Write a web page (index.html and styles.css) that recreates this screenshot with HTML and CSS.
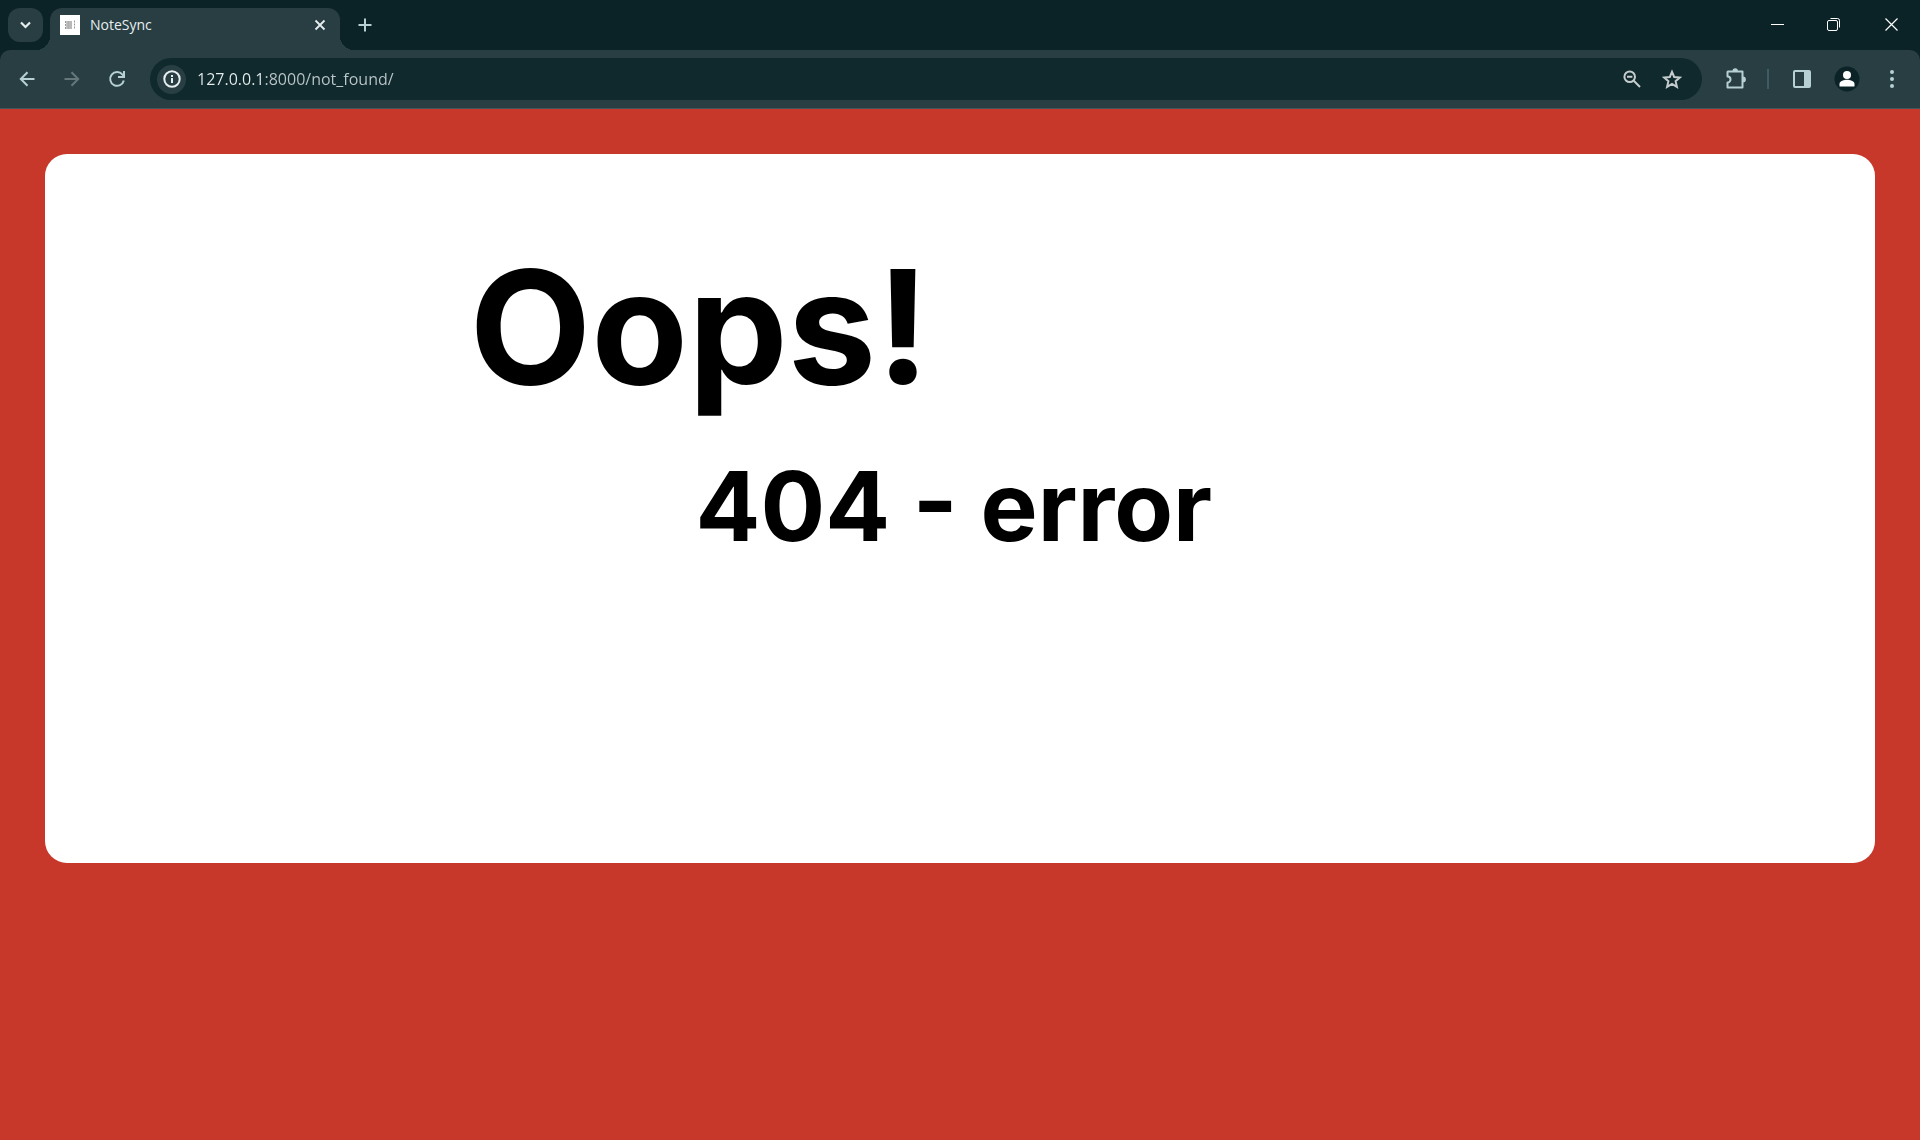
FILE: index.html
```html
<!DOCTYPE html>
<html lang="en">
<head>
<meta charset="utf-8">
<title>NoteSync</title>
<link rel="stylesheet" href="styles.css">
</head>
<body>
<header class="browser">
  <div class="tabstrip">
    <button class="tab-search" aria-label="Search tabs"><svg width="35" height="34" viewBox="0 0 35 34"><path d="M13 14.500l4.500 4.500 4.500-4.500" fill="none" stroke="#e6eeef" stroke-width="2.200"/></svg></button>
    <div class="tab">
      <svg class="favicon" width="20" height="20" viewBox="0 0 20 20"><path fill="#fff" d="M0 0h20v20H0z"/><path fill="#c4c4c4" d="M6 6h6v8H6z"/><path d="M5.500 6v8M7.500 7h4M7.500 9h4M7.500 11h4M7.500 13h4M14.500 5.500v9" stroke="#999" stroke-dasharray="2 1"/></svg>
      <span class="tab-title">NoteSync</span>
      <button class="tab-close" aria-label="Close tab"><svg width="20" height="20" viewBox="0 0 20 20"><path d="M5.500 5.500l9 9M14.500 5.500l-9 9" stroke="#e6eeef" stroke-width="1.800"/></svg></button>
    </div>
    <button class="new-tab" aria-label="New tab"><svg width="20" height="20" viewBox="0 0 20 20"><path d="M10 3.500v13M3.500 10h13" stroke="#b6d0d4" stroke-width="2"/></svg></button>
    <div class="window-controls">
      <button aria-label="Minimize"><svg width="20" height="20" viewBox="0 0 20 20"><path d="M3 9.500h13" stroke="#fff"/></svg></button>
      <button aria-label="Restore"><svg width="20" height="20" viewBox="0 0 20 20" fill="none" stroke="#fff"><rect x="2.500" y="5.500" width="10" height="10" rx="1.500"/><path d="M5.500 3.500h7a2 2 0 0 1 2 2v7"/></svg></button>
      <button aria-label="Close"><svg width="20" height="20" viewBox="0 0 20 20"><path d="M3.500 3.500l12 12M15.500 3.500l-12 12" stroke="#fff" stroke-width="1.200"/></svg></button>
    </div>
  </div>
  <div class="toolbar">
    <button class="tool" aria-label="Back"><svg width="20" height="20" viewBox="0 0 20 20" fill="none" stroke="#b6d0d4" stroke-width="2"><path d="M17.500 10H4M10.500 3.300L3.800 10l6.700 6.700"/></svg></button>
    <button class="tool" aria-label="Forward" disabled><svg width="20" height="20" viewBox="0 0 20 20" fill="none" stroke="#66777b" stroke-width="2"><path d="M2.500 10H16M9.500 3.300l6.700 6.700-6.700 6.700"/></svg></button>
    <button class="tool" aria-label="Reload"><svg width="20" height="20" viewBox="0 0 20 20" fill="none" stroke="#b6d0d4" stroke-width="2"><path d="M16.800 11.500A6.900 6.900 0 1 1 15.500 5.600L17 7.500M17 2v6h-6"/></svg></button>
    <form class="omnibox">
      <button type="button" class="site-info" aria-label="View site information"><svg width="20" height="20" viewBox="0 0 20 20"><circle cx="10" cy="10" r="7.700" fill="none" stroke="#e6eeef" stroke-width="2"/><path d="M10 9v5M10 6v2" stroke="#e6eeef" stroke-width="2"/></svg></button>
      <input class="url" type="text" aria-label="Address" value="127.0.0.1:8000/not_found/">
      <button type="button" class="omni-action" aria-label="Zoom"><svg width="20" height="20" viewBox="0 0 20 20" fill="none" stroke="#c4cccd" stroke-width="2"><circle cx="7.700" cy="7.700" r="5.300"/><path d="M5 7.700h5.400M11.500 11.500l6.500 6.500"/></svg></button>
      <button type="button" class="omni-action" aria-label="Bookmark this page"><svg width="20" height="20" viewBox="0 0 20 20"><path d="M10 2.800l2.200 5.200 5.700.5-4.300 3.700 1.300 5.600-4.900-3-4.900 3 1.300-5.600L2.100 8.500 7.800 8z" fill="none" stroke="#c4cccd" stroke-width="2"/></svg></button>
    </form>
    <button class="tool" aria-label="Extensions"><svg width="24" height="24" viewBox="0 0 24 24"><path d="M4 4.500h14.500V20.500H3.500v-5a3 3 0 0 0 0-6V5z" fill="none" stroke="#b6d0d4" stroke-width="2" stroke-linejoin="round"/><path d="M8.500 4a2.700 2.700 0 0 1 5.400 0zM19 9.500a2.800 2.800 0 0 1 0 5.800z" fill="#b6d0d4"/></svg></button>
    <span class="divider"></span>
    <button class="tool" aria-label="Side panel"><svg width="20" height="20" viewBox="0 0 20 20"><rect x="2" y="2" width="16" height="16" rx="1" fill="none" stroke="#b6d0d4" stroke-width="2"/><path d="M12 2h6v16h-6z" fill="#b6d0d4"/></svg></button>
    <button class="tool" aria-label="Profile"><svg width="26" height="26" viewBox="0 0 26 26"><circle cx="13" cy="13" r="12.500" fill="#0b2226"/><circle cx="13" cy="9" r="4" fill="#fff"/><path d="M5.500 20v-2.200c0-2.800 5-4 7.500-4s7.500 1.200 7.500 4V20q0 .5-.5.5H6q-.5 0-.5-.5z" fill="#fff"/></svg></button>
    <button class="tool" aria-label="Menu"><svg width="20" height="20" viewBox="0 0 20 20" fill="#b6d0d4"><circle cx="10" cy="3" r="2"/><circle cx="10" cy="10" r="2"/><circle cx="10" cy="17" r="2"/></svg></button>
  </div>
</header>
<main class="page">
  <section class="card">
    <h1 class="oops">Oops!</h1>
    <p class="error">404 - error</p>
  </section>
</main>
</body>
</html>
```
FILE: styles.css
```css
* { box-sizing: border-box; }

body {
  margin: 0;
  min-height: 100vh;
  display: flex;
  flex-direction: column;
  background: #c7382a;
  font-family: "Open Sans", "Noto Sans", sans-serif;
}

button {
  display: flex;
  align-items: center;
  justify-content: center;
  flex: none;
  margin: 0;
  padding: 0;
  border: 0;
  background: none;
}

.browser { background: #0b2226; }

.tabstrip {
  display: flex;
  height: 50px;
  padding: 8px 0 0 8px;
}

.tab-search {
  width: 35px;
  height: 34px;
  margin-right: 7px;
  border-radius: 12px;
  background: #283e43;
}

.tab {
  position: relative;
  display: flex;
  align-items: center;
  gap: 10px;
  width: 290px;
  padding: 0 10px 8px;
  border-radius: 12px 12px 0 0;
  background: #283e43;
}

.tab::before,
.tab::after {
  content: "";
  position: absolute;
  bottom: 0;
  width: 14px;
  height: 14px;
}

.tab::before {
  left: -14px;
  background: radial-gradient(circle at 0 0, transparent 14px, #283e43 14px);
}

.tab::after {
  right: -14px;
  background: radial-gradient(circle at 100% 0, transparent 14px, #283e43 14px);
}

.favicon { flex: none; }

.tab-title {
  flex: 1;
  color: #e6eeef;
  font-size: 14px;
  line-height: 20px;
}

.new-tab {
  width: 34px;
  height: 34px;
  margin-left: 8px;
}

.window-controls {
  display: flex;
  margin-left: auto;
}

.window-controls button {
  width: 57px;
  height: 34px;
}

.toolbar {
  display: flex;
  align-items: center;
  height: 59px;
  padding: 0 6px 0 4px;
  border-bottom: 1px solid #46575b;
  border-radius: 10px 10px 0 0;
  background: #283e43;
}

.tool {
  width: 45px;
  height: 42px;
}

.omnibox {
  display: flex;
  flex: 1;
  align-items: center;
  min-width: 0;
  height: 42px;
  margin: 0 11px;
  padding: 0 10px 0 7px;
  border-radius: 21px;
  background: #10292d;
}

.site-info {
  width: 29px;
  height: 29px;
  border-radius: 50%;
  background: #283e43;
}

.url {
  flex: 1;
  min-width: 0;
  margin: 0 0 0 11px;
  padding: 0;
  border: 0;
  outline: 0;
  background: linear-gradient(90deg, #e6eeef 67px, #bcc7c9 67px);
  background-clip: text;
  color: transparent;
  font: 16px/24px "Open Sans", "Noto Sans", sans-serif;
}

.omni-action {
  width: 40px;
  height: 34px;
}

.divider {
  width: 2px;
  height: 20px;
  margin: 0 10px 0 9px;
  background: #3f5c62;
}

.page {
  flex: 1;
  padding: 45px;
}

.card {
  min-height: 709px;
  padding: 78px 0 0 23.2%;
  border-radius: 22px;
  background: #fff;
  color: #000;
  font-family: Inter, "Open Sans", sans-serif;
  font-weight: 700;
}

.oops {
  margin: 0;
  font-size: 158px;
  line-height: 190px;
}

.error {
  margin: 26px 0 0 226px;
  font-size: 96px;
  line-height: 116px;
}
```
